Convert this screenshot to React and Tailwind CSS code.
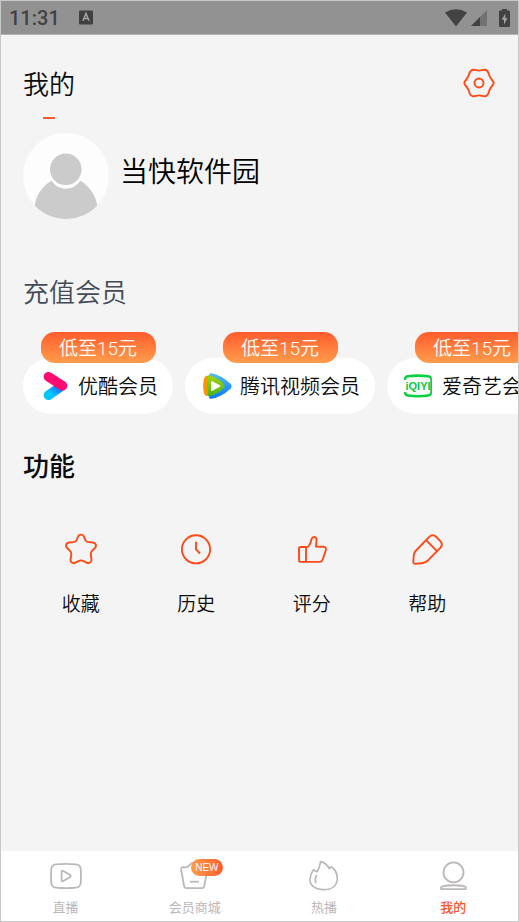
import React, { useState } from 'react';

// --- ICONS ---
const GearIcon = () => (
  <svg viewBox="0 0 32 32" className="w-8 h-8" fill="none" stroke="#ff4a17" strokeWidth="1.9">
    <path d="M2 14.3C3.6 12 5.4 10 6 7.6C6.5 5.4 7.2 3.2 10 2.8C12 2.5 13.6 3.6 16 3.6C18.4 3.6 20 2.5 22 2.8C24.8 3.2 25.5 5.4 26 7.6C26.6 10 28.4 12 30 14.3C30.8 15.4 30.8 16.6 30 17.7C28.4 20 26.6 22 26 24.4C25.5 26.6 24.8 28.8 22 29.2C20 29.5 18.4 28.4 16 28.4C13.6 28.4 12 29.5 10 29.2C7.2 28.8 6.5 26.6 6 24.4C5.4 22 3.6 20 2 17.7C1.2 16.6 1.2 15.4 2 14.3Z" />
    <circle cx="16" cy="16" r="4.5" />
  </svg>
);

const StarIcon = () => (
  <svg viewBox="0 0 32 32" className="w-8 h-8" fill="none" stroke="#ff4a17" strokeWidth="1.9" strokeLinejoin="round">
    <path d="M13.1 3.5C14.2 1 17.8 1 18.9 3.5L20.3 6.8C20.9 8.2 21.9 9 23.4 9.1L27.8 9.5C31 9.9 31.9 12.9 29.9 15L26.8 18.1C25.9 19.1 25.6 20.2 25.7 21.5L26.4 26.2C26.8 29.3 24.3 31 21.6 29.7L18 27.9C16.7 27.2 15.3 27.2 14 27.9L10.4 29.7C7.7 31 5.2 29.3 5.6 26.2L6.3 21.5C6.4 20.2 6.1 19.1 5.2 18.1L2.1 15C0.1 12.9 1 9.9 4.2 9.5L8.6 9.1C10.1 9 11.1 8.2 11.7 6.8Z" />
  </svg>
);

const ClockIcon = () => (
  <svg viewBox="0 0 32 32" className="w-8 h-8" fill="none" stroke="#ff4a17" strokeWidth="1.9">
    <circle cx="16" cy="16.3" r="14.1" />
    <path d="M16 8.7V16.3L20 20.5" />
  </svg>
);

const ThumbIcon = () => (
  <svg viewBox="0 0 32 32" className="w-8 h-8" fill="none" stroke="#ff4a17" strokeWidth="1.9" strokeLinejoin="round">
    <path d="M10 14H4.6Q3 14 3 15.6V27.3Q3 28.9 4.6 28.9H23.8Q25.8 28.9 26.4 27.2L29.8 17.4Q30.6 14 27.6 13.8L19.9 13.5L20.6 7Q20.6 4 18.2 4Q16.2 4 15.6 6C15 8.4 14 11.4 12.8 13Q12 14 10 14Z" />
    <path d="M10 14V28.9" />
  </svg>
);

const PencilIcon = () => (
  <svg viewBox="0 0 32 32" className="w-8 h-8" fill="none" stroke="#ff4a17" strokeWidth="1.9" strokeLinejoin="round">
    <path d="M18.2 3.9Q21.8 0.6 25.2 3.8L29.4 8.2Q32.4 11.6 29.3 14.9L17.2 27.2Q14.5 29.8 10.8 30.2L4.4 30.8Q2.3 30.9 2.3 28.8L2.8 22Q3 19.8 4.6 18Z" />
    <path d="M15 7.2L26 18.2" />
  </svg>
);

const AvatarIcon = () => (
  <svg viewBox="0 0 86 86" className="w-[86px] h-[86px]" role="img" aria-label="头像">
    <circle cx="43" cy="43" r="43" fill="#fdfdfd" />
    <circle cx="42.8" cy="36.3" r="15.8" fill="#cbcbcb" />
    <path d="M28.6 47.8C19.5 53 13.5 61.5 11.7 72.5A43 43 0 0 0 74.3 72.5C72.6 61.5 66 53 57.2 47.8C50.5 58.4 35 58.4 28.6 47.8Z" fill="#cbcbcb" />
  </svg>
);

const YoukuLogo = () => (
  <svg viewBox="0 0 30 30" className="w-[30px] h-[30px]" fill="none" strokeWidth="9.6" strokeLinecap="round">
    <defs>
      <linearGradient id="yk" x1="0" y1="1" x2="1" y2="0">
        <stop offset="0.2" stopColor="#00c6ff" />
        <stop offset="1" stopColor="#1a6dff" />
      </linearGradient>
    </defs>
    <path d="M8.5 24.2L19.5 16.6" stroke="url(#yk)" />
    <path d="M8.5 5.7L22.5 14.8" stroke="#ff0a70" />
  </svg>
);

const TencentLogo = () => (
  <svg viewBox="0 0 30 30" className="w-[30px] h-[30px]" strokeLinejoin="round">
    <defs>
      <linearGradient id="txb" x1="0" y1="0" x2="0" y2="1">
        <stop offset="0" stopColor="#4fb8f2" />
        <stop offset="1" stopColor="#0a7cff" />
      </linearGradient>
      <linearGradient id="txg" x1="0" y1="0" x2="0" y2="1">
        <stop offset="0" stopColor="#a2d20c" />
        <stop offset="1" stopColor="#4fb51d" />
      </linearGradient>
    </defs>
    <path d="M9 4.2C15 5.2 22 9.5 26.9 14C27.9 15 27.9 15.6 26.9 16.5C22 21 15 24.8 9 25.8C7.5 18.5 7.5 11.5 9 4.2Z" fill="url(#txb)" stroke="url(#txb)" strokeWidth="4" />
    <path d="M3.4 5.4C4.6 4.7 6.5 4.8 7.5 5V25C6.5 25.2 4.6 25.2 3.4 24.4C0.4 22.5 0.4 7.5 3.4 5.4Z" fill="#ff9300" />
    <path d="M7.4 5.8C12.5 7 18.6 11.2 20.8 14C21.3 14.7 21.3 15.2 20.8 15.9C18.6 18.7 12.5 22.6 7.4 23.8C6.4 18 6.4 12 7.4 5.8Z" fill="url(#txg)" stroke="url(#txg)" strokeWidth="3" />
    <path d="M10 11L17.4 15L10 19Z" fill="#fff" stroke="#fff" strokeWidth="1.8" />
  </svg>
);

const IqiyiLogo = () => (
  <svg viewBox="0 0 30 30" className="w-[30px] h-[30px]">
    <path d="M0 9V8Q0 4.6 3.5 4.1Q14 2.2 24.5 4.1Q28 4.6 28 8V21.8Q28 25.2 24.5 25.7Q14 27.2 3.5 25.7Q0 25.2 0 21.8V21H2.2Q2.4 23 4 23.3Q14 24.5 24 23.3Q26.3 23 26.3 21V8.5Q26.3 6.9 24 6.6Q14 5.4 4 6.6Q2 6.9 2 9Z" fill="#08d13f" />
    <text x="14" y="19" textAnchor="middle" fontFamily="'Liberation Sans', sans-serif" fontWeight="700" fontSize="11" fill="#08c83c">iQIYI</text>
  </svg>
);

const LiveIcon = () => (
  <svg viewBox="0 0 32 32" className="w-8 h-8" fill="none" stroke="currentColor" strokeWidth="1.8" strokeLinejoin="round">
    <path d="M6 4.4Q16 3.4 26 4.4Q30.3 4.8 30.7 9Q31.3 16 30.7 23Q30.3 27.2 26 27.6Q16 28.6 6 27.6Q1.7 27.2 1.3 23Q0.7 16 1.3 9Q1.7 4.8 6 4.4Z" />
    <path d="M11.6 12Q11.7 10.2 13.3 11L20 14.9Q21.5 16 20 17.1L13.3 21Q11.7 21.8 11.6 20Z" />
  </svg>
);

const MallIcon = () => (
  <svg viewBox="0 0 32 32" className="w-8 h-8" fill="none" stroke="currentColor" strokeWidth="1.8" strokeLinejoin="round">
    <path d="M2.2 10Q1.7 6.6 5 7.3C8.5 8.2 9.4 6.6 11.3 4.4C13.5 2 16 2 18 4.4C20 7 22 8.2 25.5 7.3Q28.6 6.8 28.2 10L25.3 26.2Q25 28.1 23.2 28.1H7.2Q5.4 28.1 5.1 26.2Z" />
    <path d="M11 21.7H20" />
  </svg>
);

const FireIcon = () => (
  <svg viewBox="0 0 32 32" className="w-8 h-8" fill="none" stroke="currentColor" strokeWidth="1.7" strokeLinejoin="round" strokeLinecap="round">
    <path d="M12.6 1.6C16.5 2.6 19.8 5.4 21.2 8.6L23.3 6.8C27.3 9.8 29.4 14 29.3 18.4C29 26 23.4 29.7 16 29.7C8 29.7 2 26.2 2 19.4C2 15.6 3.6 12.4 5.4 9.8C6.4 10.2 7.6 11.3 8.9 11.6C11.2 9.4 11.8 5.2 12.6 1.6Z" />
    <path d="M8.4 15.7C7.2 17.6 7 20 7.8 22.4" />
  </svg>
);

const MineIcon = () => (
  <svg viewBox="0 0 32 32" className="w-8 h-8" fill="none" stroke="#bcb8b8" strokeWidth="1.8" strokeLinejoin="round">
    <circle cx="16.5" cy="12.4" r="10" />
    <path d="M4.1 29.1V27.2C7 24.6 26 24.6 28.9 27.2V29.1Z" />
  </svg>
);

// --- DATA ---
const vipCards = [
  { name: '优酷会员', Logo: YoukuLogo },
  { name: '腾讯视频会员', Logo: TencentLogo },
  { name: '爱奇艺会员', Logo: IqiyiLogo },
];

const features = [
  { label: '收藏', Icon: StarIcon },
  { label: '历史', Icon: ClockIcon },
  { label: '评分', Icon: ThumbIcon },
  { label: '帮助', Icon: PencilIcon },
];

const tabs = [
  { label: '直播', Icon: LiveIcon },
  { label: '会员商城', Icon: MallIcon, badge: 'NEW' },
  { label: '热播', Icon: FireIcon },
  { label: '我的', Icon: MineIcon },
];

const StatusBar = () => (
  <div className="h-[34px] px-2 flex items-center bg-[#929292] border-b border-[#b4b4b4] text-[#424242]">
    <span className="text-[20px] leading-6 font-medium">11:31</span>
    <svg viewBox="0 0 14 15" className="ml-[19px] w-[14px] h-[15px]">
      <path d="M1.2 0.5H12.8Q14 0.5 14 1.7V13.3Q14 14.5 12.8 14.5H1.2Q0 14.5 0 13.3V1.7Q0 0.5 1.2 0.5Z" fill="#404040" />
      <path d="M4 10.8L7 3.5L10 10.8M5.2 8.5H8.8" fill="none" stroke="#a5a5a5" strokeWidth="1.5" />
    </svg>
    <div className="ml-auto flex items-center">
      <svg viewBox="0 0 22 18" className="w-[22px] h-[18px]">
        <path d="M0 3.4Q11 -3 22 3.4L11 17.5Z" fill="#424242" />
      </svg>
      <svg viewBox="0 0 16 16" className="ml-1 w-4 h-4">
        <path d="M16 0V16H0Z" fill="#727272" />
        <path d="M9 7V16H0Z" fill="#424242" />
      </svg>
      <svg viewBox="0 0 11 18" className="ml-3 w-[11px] h-[18px]">
        <path d="M3 0H8V1.5H10Q11 1.5 11 2.5V17Q11 18 10 18H1Q0 18 0 17V2.5Q0 1.5 1 1.5H3Z" fill="#424242" />
        <path d="M6.3 4.5L2.8 10.8H5V15.5L8.4 9.2H6.3Z" fill="#a5a5a5" />
      </svg>
    </div>
  </div>
);

const App = () => {
  const [active, setActive] = useState('我的');

  return (
    <div className="min-h-screen flex flex-col overflow-hidden bg-[#f4f4f4] border border-[#c8c8c8] text-[#0c0c0c] font-[Roboto,'Noto_Sans_CJK_SC',sans-serif]">
      <StatusBar />

      <main className="flex flex-col font-[350]">
        {/* Title */}
        <header className="pl-[22px] pr-[23px] pt-8 flex justify-between items-start">
          <div className="flex flex-col items-center">
            <h1 className="text-[26px] leading-9">我的</h1>
            <span className="mt-[14px] w-3 h-[2px] bg-[#ff5a33]" />
          </div>
          <button type="button" aria-label="设置">
            <GearIcon />
          </button>
        </header>

        {/* Profile */}
        <section className="mt-[14px] px-[22px] flex items-start gap-[11px]">
          <AvatarIcon />
          <p className="pt-[22px] text-[28px] leading-9 text-black">当快软件园</p>
        </section>

        {/* VIP */}
        <section className="mt-14">
          <h2 className="px-[22px] text-[26px] leading-9 text-[#434b57]">充值会员</h2>
          <div className="mt-[21px] pl-[22px] flex gap-3 overflow-hidden">
            {vipCards.map(({ name, Logo }) => (
              <button key={name} type="button" className="shrink-0 flex flex-col items-center">
                <span className="relative z-10 -mb-[5px] w-[115px] h-[31px] rounded-[14px] bg-gradient-to-b from-[#ff5a2d] to-[#ff9c4c] text-white text-[19px] leading-[33px] text-center">
                  低至15元
                </span>
                <span className="h-14 pl-[17px] pr-[15px] flex items-center gap-2 rounded-full bg-white text-[20px] whitespace-nowrap">
                  <Logo />
                  <span className="pt-[2px]">{name}</span>
                </span>
              </button>
            ))}
          </div>
        </section>

        {/* Features */}
        <section className="mt-[35px] pl-[22px] pr-[33px]">
          <h2 className="text-[26px] leading-9 font-medium">功能</h2>
          <div className="mt-12 grid grid-cols-4">
            {features.map(({ label, Icon }) => (
              <button key={label} type="button" className="flex flex-col items-center gap-[26px] text-[19px] leading-7">
                <Icon />
                {label}
              </button>
            ))}
          </div>
        </section>
      </main>

      {/* Tab bar */}
      <nav className="mt-auto h-[70px] pt-[9px] grid grid-cols-4 bg-white">
        {tabs.map(({ label, Icon, badge }) => (
          <button
            key={label}
            type="button"
            onClick={() => setActive(label)}
            className={`flex flex-col items-center gap-[6px] text-[13px] leading-5 ${active === label ? 'text-[#ff5226] font-medium' : 'text-[#bcb8b8]'}`}
          >
            <span className="relative">
              <Icon />
              {badge && (
                <span className="absolute -top-px left-3 w-8 h-[17px] rounded-full bg-gradient-to-r from-[#ff9c4c] to-[#ff5a2d] text-white text-[10px] leading-[17px] text-center font-['Liberation_Sans',sans-serif]">
                  {badge}
                </span>
              )}
            </span>
            {label}
          </button>
        ))}
      </nav>
    </div>
  );
};

export default App;
